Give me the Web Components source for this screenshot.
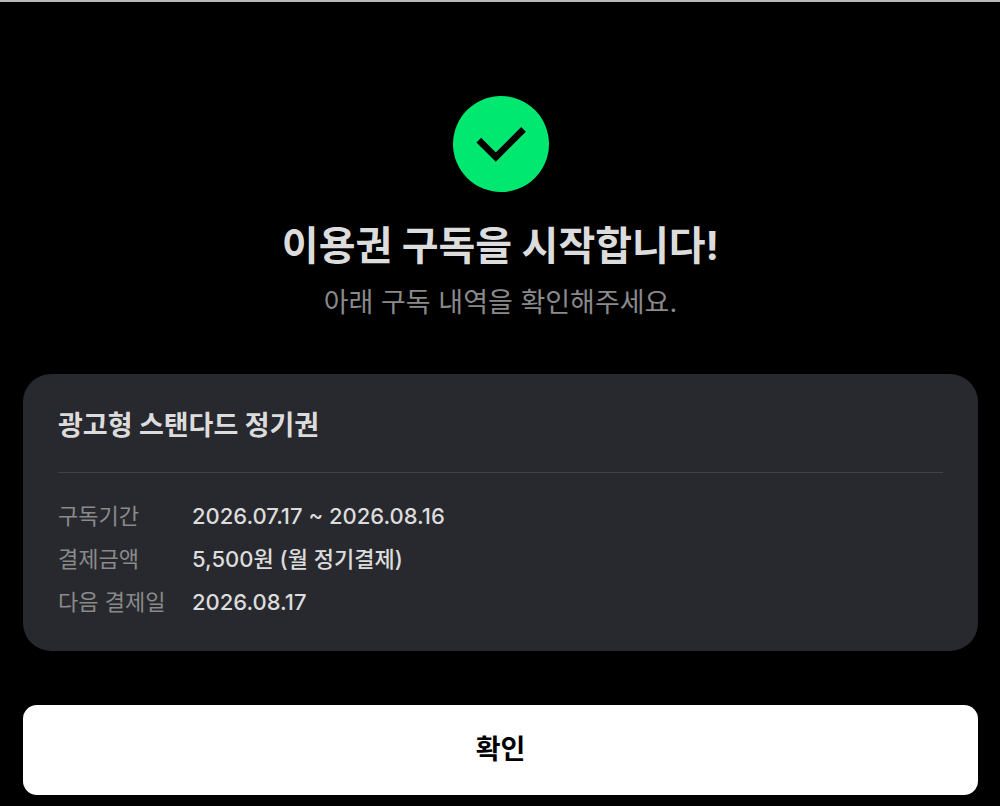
<!DOCTYPE html>
<html lang="ko">
<head>
<meta charset="utf-8">
<meta name="viewport" content="width=device-width, initial-scale=1">
<title>이용권 구독 완료</title>
<style>
body { margin: 0; background: #000; color: #dcdcdc; font-family: Inter, "Noto Sans CJK KR", sans-serif; }
</style>
</head>
<body>
<subscribe-page>
  <result-header slot="header">
    <span slot="title">이용권 구독을 시작합니다!</span>
    <span slot="description">아래 구독 내역을 확인해주세요.</span>
  </result-header>
  <plan-card>
    <span slot="name">광고형 스탠다드 정기권</span>
    <plan-row label="구독기간">2026.07.17 ~ 2026.08.16</plan-row>
    <plan-row label="결제금액">5,500원 (월 정기결제)</plan-row>
    <plan-row label="다음 결제일">2026.08.17</plan-row>
  </plan-card>
  <confirm-button slot="action">확인</confirm-button>
</subscribe-page>
<script>
const define = (name, html, setup) => {
  const template = document.createElement('template');
  template.innerHTML = html;
  customElements.define(name, class extends HTMLElement {
    constructor() {
      super();
      this.attachShadow({ mode: 'open' }).append(template.content.cloneNode(true));
    }
    connectedCallback() { if (setup) setup(this, this.shadowRoot); }
  });
};

define('success-icon', `
  <style>
    :host { display: block; width: 96px; height: 96px; }
    svg { display: block; width: 100%; height: 100%; }
  </style>
  <svg viewBox="0 0 96 96" aria-hidden="true">
    <circle cx="48" cy="48" r="48" fill="#00e870"/>
    <path d="M25.8 44.2 L42.8 61 L70.5 33.3" fill="none" stroke="#000" stroke-width="6.6"/>
  </svg>`);

define('result-header', `
  <style>
    :host { display: flex; flex-direction: column; align-items: center; text-align: center; }
    h1 { margin: 26px 0 0; font-size: 40px; line-height: 56px; font-weight: 700; }
    p { margin: 9px 0 0; font-size: 27px; line-height: 40px; color: #8a8a8a; }
  </style>
  <success-icon></success-icon>
  <h1><slot name="title"></slot></h1>
  <p><slot name="description"></slot></p>`);

define('plan-card', `
  <style>
    :host { display: block; padding: 32px 35px 33px; border-radius: 28px; background: #28292e; }
    h2 { margin: 0; padding-bottom: 26px; border-bottom: 1px solid #424242; font-size: 27px; line-height: 40px; font-weight: 700; }
    dl { display: grid; gap: 11px; margin: 27px 0 0; }
  </style>
  <h2><slot name="name"></slot></h2>
  <dl><slot></slot></dl>`);

define('plan-row', `
  <style>
    :host { display: flex; font-size: 22px; line-height: 32px; }
    dt { flex: none; width: 134px; color: #8a8a8a; }
    dd { margin: 0; font-weight: 500; }
  </style>
  <dt></dt><dd><slot></slot></dd>`,
  (host, root) => { root.querySelector('dt').textContent = host.getAttribute('label'); });

define('confirm-button', `
  <style>
    :host { display: block; }
    button { display: block; width: 100%; padding: 25px 0; border: 0; border-radius: 14px; background: #fff; color: #000; font: inherit; font-size: 27px; line-height: 40px; font-weight: 700; cursor: pointer; }
  </style>
  <button type="button"><slot></slot></button>`);

define('subscribe-page', `
  <style>
    :host { display: block; border-top: 2px solid #b8b8b8; padding: 94px 22px 11px 23px; }
    main { display: flex; flex-direction: column; }
    slot[name="action"] { display: block; margin-top: 54px; }
    slot[name="header"] { display: block; margin-bottom: 51px; }
  </style>
  <main><slot name="header"></slot><slot></slot><slot name="action"></slot></main>`);
</script>
</body>
</html>
